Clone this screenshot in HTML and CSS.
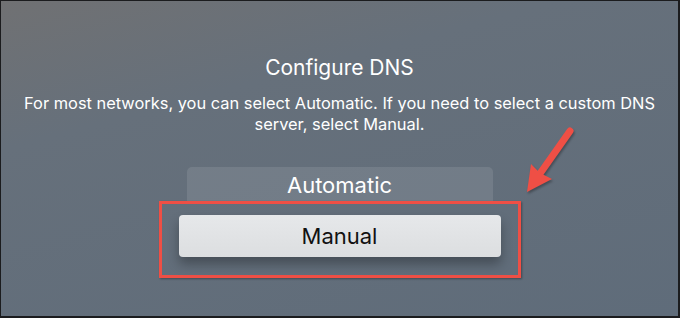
FILE: index.html
```html
<!DOCTYPE html>
<html lang="en">
<head>
    <meta charset="UTF-8">
    <meta name="viewport" content="width=device-width, initial-scale=1.0">
    <title>Configure DNS</title>
    <link rel="stylesheet" href="styles.css">
</head>
<body>
    <div class="screen">
        <h1 class="title">Configure DNS</h1>
        <p class="desc">For most networks, you can select Automatic. If you need to select a custom DNS server, select Manual.</p>

        <div class="options">
            <div class="option option-auto">Automatic</div>
            <div class="highlight">
                <div class="option option-manual">Manual</div>
            </div>
        </div>

        <!-- annotation arrow drawn over the screen -->
        <svg class="arrow" width="680" height="318" viewBox="0 0 680 318">
            <line x1="570" y1="131" x2="539" y2="175" stroke="#ef4f45" stroke-width="7" stroke-linecap="round"/>
            <polygon points="527,192 531,164 540,173 552,179" fill="#ef4f45"/>
        </svg>
    </div>
</body>
</html>
```

FILE: styles.css
```css
html, body {
    margin: 0;
    padding: 0;
}

body {
    font-family: Inter, "Liberation Sans", sans-serif;
    background-color: #111;
}

.screen {
    position: relative;
    box-sizing: border-box;
    width: 680px;
    height: 318px;
    border-style: solid;
    border-color: #1b1c1e;
    border-width: 1px 2px 2px 1px;
    background: linear-gradient(165deg, #707173 0%, #66707b 30%, #5f6c7a 100%);
    display: flex;
    flex-direction: column;
    align-items: center;
    color: #fff;
    overflow: hidden;
}

.title {
    margin: 54px 0 0;
    font-size: 21px;
    font-weight: 400;
    line-height: 25px;
}

.desc {
    margin: 13px 0 0;
    padding: 0 20px;
    font-size: 16.4px;
    line-height: 21px;
    text-align: center;
}

.options {
    margin-top: 32px;
    display: flex;
    flex-direction: column;
    align-items: center;
}

.option {
    box-sizing: border-box;
    display: flex;
    align-items: center;
    justify-content: center;
    font-size: 22px;
}

.option-auto {
    width: 306px;
    height: 34px;
    padding-top: 2px;
    border-radius: 5px 5px 0 0;
    background-color: rgba(255, 255, 255, 0.1);
}

.highlight {
    width: 362px;
    height: 77px;
    box-sizing: border-box;
    border: 3px solid #ef4f45;
    padding: 11px 17px 0;
    box-shadow: 1px 1px 2px rgba(0, 0, 0, 0.35);
}

.option-manual {
    height: 42px;
    border-radius: 4px;
    background: linear-gradient(180deg, #e6e8ea, #dcdee0);
    color: #111;
    box-shadow: 0 7px 12px rgba(0, 0, 0, 0.3);
}

.arrow {
    position: absolute;
    left: -1px;
    top: -1px;
    pointer-events: none;
    filter: drop-shadow(1px 2px 1px rgba(0, 0, 0, 0.3));
}
```
